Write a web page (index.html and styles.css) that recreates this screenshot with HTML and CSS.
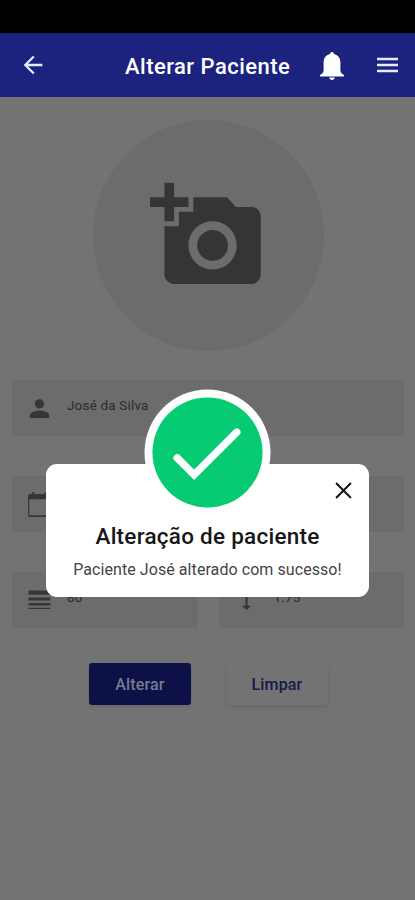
FILE: index.html
```html
<!DOCTYPE html>
<html lang="pt-BR">
<head>
<meta charset="utf-8">
<title>Alterar Paciente</title>
<link rel="stylesheet" href="styles.css">
</head>
<body>
<div class="status"></div>
<header class="appbar">
  <svg class="back" viewBox="0 0 24 24"><path d="M20 11H7.830l5.590-5.590L12 4l-8 8 8 8 1.410-1.410L7.830 13H20z"/></svg>
  <h1>Alterar Paciente</h1>
  <svg class="bell" viewBox="0 0 24 28"><path d="M12 0c1.200 0 1.900.8 1.900 1.900 4.400 1 6.500 4.400 6.500 8.600V18c0 2.200 1.200 4 3.600 5v1.500H0V23c2.400-1 3.600-2.800 3.600-5v-7.500c0-4.200 2.100-7.600 6.500-8.600C10.100.8 10.800 0 12 0zM9.300 25.500h5.400c0 1.500-1.200 2.500-2.700 2.500s-2.700-1-2.700-2.500z"/></svg>
  <svg class="menu" viewBox="0 0 22 16"><path d="M0 .5h22v2.600H0zM0 6.700h22v2.600H0zM0 12.900h22v2.600H0z"/></svg>
</header>
<main>
  <div class="photo">
    <svg viewBox="0 0 24 24"><path d="M3 4V1h2v3h3v2H5v3H3V6H0V4h3zm3 6V7h3V4h7l1.830 2H21c1.100 0 2 .9 2 2v12c0 1.100-.9 2-2 2H5c-1.100 0-2-.9-2-2V10h3zm7 9c2.760 0 5-2.240 5-5s-2.240-5-5-5-5 2.240-5 5 2.240 5 5 5zm-3.200-5c0 1.770 1.430 3.200 3.200 3.200s3.200-1.430 3.200-3.200-1.430-3.200-3.200-3.200-3.200 1.430-3.200 3.200z"/></svg>
  </div>
  <div class="fields">
    <div class="field wide">
      <svg viewBox="0 0 24 24"><path d="M12 12c2.500 0 4.400-2 4.400-4.500S14.500 3 12 3 7.600 5 7.600 7.500 9.500 12 12 12zm0 2c-3.200 0-9.300 1.500-9.300 4.600V21h18.600v-2.400C21.300 15.500 15.200 14 12 14z"/></svg>
      <span>José da Silva</span>
    </div>
    <div class="field wide">
      <svg viewBox="0 0 24 24"><path d="M20.500 2H19V0h-2v2H7V0H5v2H3C1.900 2 1 2.900 1 4v18.500c0 1 .9 1.500 2 1.500h18c1.100 0 2-.5 2-1.500V4c0-1.100-.9-2-2.500-2zM21.800 22.400H2.200V7h19.600z"/></svg>
    </div>
    <div class="field">
      <svg viewBox="0 0 24 24"><path d="M1.500 2.500h21v4h-21zM1.500 9h21v3h-21zM1.500 14.500h21v2.200h-21zM1.500 19h21v1.200h-21z"/></svg>
      <span>80</span>
    </div>
    <div class="field">
      <svg viewBox="0 0 24 24"><path d="M13 5h3.500L12 .5 7.500 5H11v12H7.500l4.500 4.200 4.500-4.200H13z"/></svg>
      <span>1.75</span>
    </div>
  </div>
  <div class="actions">
    <button class="btn primary">Alterar</button>
    <button class="btn plain">Limpar</button>
  </div>
</main>
<section class="dialog" role="dialog">
  <svg class="success" viewBox="0 0 128 128"><circle cx="64" cy="64" r="63.500" fill="#fff"/><circle cx="64" cy="64" r="55.500" fill="#07cb73"/><path d="M33.500 69.500 50.500 86.500 93.500 43.500" fill="none" stroke="#fff" stroke-width="7.500" stroke-linecap="round"/></svg>
  <svg class="close" viewBox="0 0 16 16"><path d="M1 1l14 14M15 1L1 15"/></svg>
  <h2>Alteração de paciente</h2>
  <p>Paciente José alterado com sucesso!</p>
</section>
</body>
</html>
```
FILE: styles.css
```css
* { box-sizing: border-box; }
body {
  margin: 0;
  height: 900px;
  overflow: hidden;
  position: relative;
  background: #737373;
  font-family: Roboto, sans-serif;
}
svg { display: block; flex: none; }
.status { height: 33px; background: #000; }
.appbar {
  height: 64px;
  display: flex;
  align-items: center;
  padding: 0 17px 0 19px;
  background: #1b237e;
  color: #fff;
  fill: #fff;
}
.back { width: 28px; height: 28px; fill: #e6ecff; }
.appbar h1 {
  margin: 3px 0 0 78px;
  width: 167px;
  font-size: 22px;
  font-weight: 500;
  line-height: 28px;
  letter-spacing: .47px;
  white-space: nowrap;
}
.bell { width: 24px; height: 28px; margin: 1px 0 0 28px; }
.menu { width: 21px; height: 16px; margin-left: auto; fill: #e6ecff; }
main { padding: 23px 11px 0 12px; }
.photo {
  width: 231px;
  height: 231px;
  margin: 0 auto;
  border-radius: 50%;
  background: #6c6c6c;
  display: flex;
  align-items: center;
  justify-content: center;
}
.photo svg { width: 115.600px; height: 115.600px; margin-top: 1px; fill: #353535; }
.fields {
  margin-top: 29px;
  display: grid;
  grid-template-columns: 1fr 1fr;
  column-gap: 21px;
  row-gap: 40px;
}
.field {
  height: 56px;
  display: flex;
  align-items: center;
  padding-left: 15px;
  background: #6c6c6c;
  color: #2b2b2b;
  font-size: 13.500px;
}
.field svg { width: 25px; height: 25px; fill: #363636; }
.field span { margin: -7px 0 0 15px; letter-spacing: .17px; }
.wide { grid-column: 1 / -1; }
.actions { display: flex; gap: 35px; margin: 35px 0 0 77px; }
.btn {
  width: 102px;
  height: 42px;
  padding: 0;
  border: 0;
  border-radius: 3px;
  font: 500 16px Roboto, sans-serif;
  letter-spacing: .15px;
  box-shadow: 0 2px 3px #5555;
}
.primary { background: #0e1148; color: #777a91; }
.plain { background: #737373; color: #15194c; }
.dialog {
  position: absolute;
  left: 46px;
  top: 464px;
  width: 323px;
  height: 133px;
  padding-top: 57px;
  border-radius: 11px;
  background: #fff;
  text-align: center;
}
.success { position: absolute; left: 98px; top: -75px; width: 127px; height: 127px; }
.close {
  position: absolute;
  right: 17px;
  top: 18px;
  width: 17px;
  height: 17px;
  fill: none;
  stroke: #151515;
  stroke-width: 1.900;
}
.dialog h2 { margin: 0; font-size: 22.500px; line-height: 30px; font-weight: 500; letter-spacing: .25px; color: #171717; white-space: nowrap; }
.dialog p { margin: 8px 0 0; font-size: 16px; line-height: 22px; letter-spacing: .07px; color: #444; white-space: nowrap; }
```
